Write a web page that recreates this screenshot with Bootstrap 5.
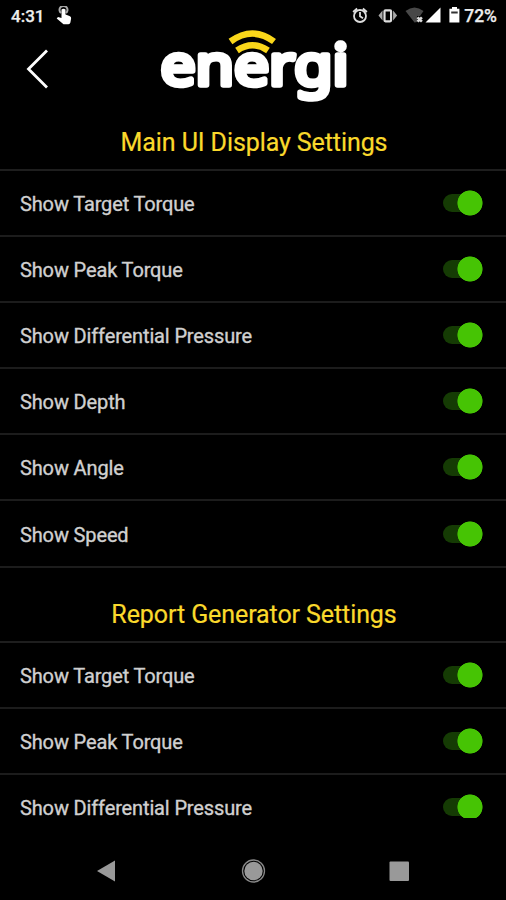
<!DOCTYPE html>
<html lang="en">
<head>
<meta charset="utf-8">
<meta name="viewport" content="width=device-width, initial-scale=1">
<title>Energi settings</title>
<link href="https://cdn.jsdelivr.net/npm/bootstrap@5.3.0/dist/css/bootstrap.min.css" rel="stylesheet">
<style>
body{background:#000;color:#d0d0d0;font-family:Roboto,"Liberation Sans",sans-serif;height:900px;overflow:hidden}
.screen{height:900px}
.statusbar{height:32px;padding:0 9px 0 11px;color:#eee;font-size:17px;font-weight:500;line-height:32px;-webkit-text-stroke:.25px #eee}
.touch-icon{margin-left:12px}
.battery-level{font-size:17.500px;margin-left:2px}
.app-header{height:82px;padding-left:26px}
.back-btn{margin-top:17px;width:24px;height:40px}
.brand{margin-left:107px;margin-top:-6px;overflow:visible}
.settings-pane{height:704px;overflow:hidden}
.group-title{color:#fad92c;font-size:25px;font-weight:400;line-height:30px;height:57px;padding-top:14px;padding-left:2px;letter-spacing:-.09px;border-bottom:2px solid #1e1e1e;-webkit-text-stroke:.2px #fad92c}
.group-title.later{height:75px;padding-top:32px}
.setting{height:66.100px;padding:1px 23px 0 20px;border-bottom:2px solid #1c1c1c;font-size:20px;line-height:20px;letter-spacing:-.14px;-webkit-text-stroke:.35px #d0d0d0}
.setting-label{padding-top:1px}
.toggle{width:40px;height:26px;margin-top:-1px;background:radial-gradient(circle at 27px 13px,#46c404 12.200px,transparent 12.900px)}
.toggle::before{content:"";display:block;width:29px;height:18px;border-radius:9px;background:#153b04;position:relative;z-index:-1;top:4px}
.navkeys{height:82px}
svg{display:block;flex:none}
</style>
<script src="https://cdn.jsdelivr.net/npm/bootstrap@5.3.0/dist/js/bootstrap.bundle.min.js"></script>
</head>
<body>
<div class="screen d-flex flex-column">
  <div class="statusbar d-flex align-items-center">
    <span id="clock">4:31</span>
    <svg class="touch-icon" width="16" height="20" viewBox="0 0 16 20"><path d="M5 7a4 4 0 1 1 5 0" fill="none" stroke="#aaa" stroke-width="2"/><path d="M5.500 3.500q2-1.500 4 0V8.500l4 1.600q2 .7 1.600 2.400l-.7 4q-.4 1.700-2 1.700H7.500L.7 12.500 2 11l3.500 1z" fill="#fff"/></svg>
    <div class="d-flex align-items-center ms-auto">
      <svg width="111" height="22" viewBox="350.500 5 111 22">
        <g fill="none" stroke="#ddd" stroke-width="1.800"><circle cx="359.500" cy="16" r="6"/><path d="M359.500 12v4.200l3 2M352.600 12l4-3.500M366.400 12l-4-3.500"/></g>
        <rect x="384" y="10.300" width="6.600" height="11" rx="1" fill="none" stroke="#ddd" stroke-width="2.200"/>
        <path d="M382 10.500v10l-4-5zM392.600 10.500v10l4-5z" fill="#aaa"/>
        <path d="M405 11q9-7 18 0l-3.500 5h-3v6L414 22.500z" fill="#484848"/><path d="M417 17.300l4.400 4.400m0-4.400l-4.400 4.400" stroke="#ddd" stroke-width="2.600"/>
        <path d="M440 7.500V22.500H425z" fill="#fff"/>
        <path d="M451.500 7h5v1.800h2.400v13.700h-10V8.800h2.600z" fill="#fff"/><path d="M450.700 11.500h6.500v2h-6.500z" fill="#333"/>
      </svg>
      <span class="battery-level">72%</span>
    </div>
  </div>
  <header class="app-header d-flex">
    <svg class="back-btn" viewBox="26 49 24 40"><path d="M47 50.500L28.500 69 47 87.500" fill="none" stroke="#fff" stroke-width="2.800"/></svg>
    <svg class="brand" width="194" height="84" viewBox="157 26 194 84" role="img" aria-label="energi">
      <text x="160.500" y="85.300" font-family="Noto Sans,sans-serif" font-weight="400" font-size="57" textLength="188" lengthAdjust="spacingAndGlyphs" fill="#fff" stroke="#fff" stroke-width="5.600" stroke-linejoin="round">energi</text>
      <g fill="none" stroke="#fad71a" stroke-width="6.500"><path d="M230.500 41.500Q252.500 25.500 274 41.500"/><path d="M237 50.500Q252.500 40 268 50.500"/></g>
    </svg>
  </header>
  <main class="settings-pane">
    <h2 class="group-title text-center mb-0">Main UI Display Settings</h2>
    <div class="setting d-flex align-items-center justify-content-between"><span class="setting-label">Show Target Torque</span><span class="toggle"></span></div>
    <div class="setting d-flex align-items-center justify-content-between"><span class="setting-label">Show Peak Torque</span><span class="toggle"></span></div>
    <div class="setting d-flex align-items-center justify-content-between"><span class="setting-label">Show Differential Pressure</span><span class="toggle"></span></div>
    <div class="setting d-flex align-items-center justify-content-between"><span class="setting-label">Show Depth</span><span class="toggle"></span></div>
    <div class="setting d-flex align-items-center justify-content-between"><span class="setting-label">Show Angle</span><span class="toggle"></span></div>
    <div class="setting d-flex align-items-center justify-content-between"><span class="setting-label">Show Speed</span><span class="toggle"></span></div>
    <h2 class="group-title later text-center mb-0">Report Generator Settings</h2>
    <div class="setting d-flex align-items-center justify-content-between"><span class="setting-label">Show Target Torque</span><span class="toggle"></span></div>
    <div class="setting d-flex align-items-center justify-content-between"><span class="setting-label">Show Peak Torque</span><span class="toggle"></span></div>
    <div class="setting d-flex align-items-center justify-content-between"><span class="setting-label">Show Differential Pressure</span><span class="toggle"></span></div>
  </main>
  <nav class="navkeys">
    <svg width="506" height="82" viewBox="0 818 506 82"><path d="M97 871L115 860.500V881.500z" fill="#999"/><circle cx="253.500" cy="871" r="9.200" fill="#999"/><circle cx="253.500" cy="871" r="11" fill="none" stroke="#888" stroke-width="1.300"/><rect x="389.500" y="861.500" width="19.500" height="19.500" rx="1" fill="#999"/></svg>
  </nav>
</div>
</body>
</html>
